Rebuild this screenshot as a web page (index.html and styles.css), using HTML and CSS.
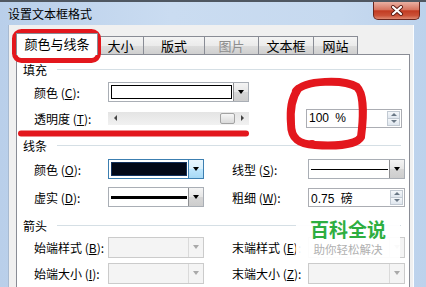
FILE: index.html
```html
<!DOCTYPE html>
<html lang="zh-CN">
<head>
  <meta charset="UTF-8">
  <title>设置文本框格式</title>
  <link rel="stylesheet" href="styles.css">
</head>
<body>

<div class="window">
  <div class="titlebar">
    <span class="title">设置文本框格式</span>
    <span class="close">
      <svg width="14" height="11" viewBox="0 0 14 11">
        <path d="M3 2 L11 9 M11 2 L3 9" stroke="#5a1c14" stroke-width="4" stroke-linecap="round"/>
        <path d="M3 2 L11 9 M11 2 L3 9" stroke="#fff" stroke-width="2.2" stroke-linecap="round"/>
      </svg>
    </span>
  </div>

  <div class="client">
    <div class="tabs">
      <div class="tab active t-color">颜色与线条</div>
      <div class="tab t-size">大小</div>
      <div class="tab t-layout">版式</div>
      <div class="tab t-pic disabled">图片</div>
      <div class="tab t-box">文本框</div>
      <div class="tab t-web">网站</div>
    </div>

    <div class="page">
      <div class="group">填充</div>
      <div class="row">
        <span class="lab">颜色 (<u>C</u>):</span>
        <div class="combo wide">
          <span class="val"></span>
          <span class="btn"></span>
        </div>
      </div>
      <div class="row">
        <span class="lab">透明度 (<u>T</u>):</span>
        <div class="slider">
          <span class="arr left"></span>
          <span class="track"></span>
          <span class="thumb"></span>
          <span class="arr right"></span>
        </div>
        <div class="spin pct">
          <span class="txt">100 %</span>
          <span class="arrows"><span class="up"></span><span class="down"></span></span>
        </div>
      </div>

      <div class="group sec">线条</div>
      <div class="row tall">
        <span class="lab">颜色 (<u>O</u>):</span>
        <div class="combo focus">
          <span class="val"></span>
          <span class="btn"></span>
        </div>
        <span class="lab lab2">线型 (<u>S</u>):</span>
        <div class="combo right">
          <span class="val thin"></span>
          <span class="btn"></span>
        </div>
      </div>
      <div class="row tall">
        <span class="lab">虚实 (<u>D</u>):</span>
        <div class="combo">
          <span class="val thick"></span>
          <span class="btn"></span>
        </div>
        <span class="lab lab2">粗细 (<u>W</u>):</span>
        <div class="spin right">
          <span class="txt">0.75 磅</span>
          <span class="arrows"><span class="up"></span><span class="down"></span></span>
        </div>
      </div>

      <div class="group sec">箭头</div>
      <div class="row first">
        <span class="lab">始端样式 (<u>B</u>):</span>
        <div class="combo off">
          <span class="val"></span>
          <span class="btn"></span>
        </div>
        <span class="lab lab2">末端样式 (<u>E</u>):</span>
        <div class="combo off right">
          <span class="val"></span>
          <span class="btn"></span>
        </div>
      </div>
      <div class="row last">
        <span class="lab">始端大小 (<u>I</u>):</span>
        <div class="combo off">
          <span class="val"></span>
          <span class="btn"></span>
        </div>
        <span class="lab lab2">末端大小 (<u>Z</u>):</span>
        <div class="combo off right">
          <span class="val"></span>
          <span class="btn"></span>
        </div>
      </div>
    </div>
  </div>
</div>

<div class="watermark">
  <span class="wm-title">百科全说</span>
  <span class="wm-sub">助你轻松解决</span>
</div>

<svg class="marks" width="426" height="287" viewBox="0 0 426 287">
  <rect x="14.5" y="31.5" width="84" height="29" rx="7" fill="none" stroke="#e3171d" stroke-width="5"/>
  <path d="M21 133.5 L246 133.5" stroke="#e3171d" stroke-width="6" stroke-linecap="round"/>
  <path d="M296 91 C305 80 344 79 357 87 C365 95 363 122 361 137 C356 146 330 146 315 145 C299 144 291 139 291 124 C290 110 291 99 298 89"
        fill="none" stroke="#e3171d" stroke-width="8" stroke-linecap="round"/>
  <circle cx="312" cy="144" r="4" fill="#e3171d"/>
</svg>

</body>
</html>
```

FILE: styles.css
```css
body {
  margin: 0;
  width: 426px;
  height: 287px;
  overflow: hidden;
  position: relative;
  font-family: "Noto Sans CJK SC", "Noto Sans", sans-serif;
  font-size: 12px;
  color: #000;
  background: #c2d6ee;
}
.window {
  display: flex;
  flex-direction: column;
  height: 285px;
  border-top: 2px solid #4f5761;
  background: linear-gradient(to right, #b9cfea, #cadcf1 40%, #c6d9ef 80%, #bcd2ec);
}
.titlebar {
  height: 25px;
  display: flex;
  justify-content: space-between;
  align-items: flex-start;
}
.title {
  padding: 3px 0 0 8px;
  line-height: 18px;
}
.close {
  width: 45px;
  height: 17px;
  margin-right: 6px;
  border: 1px solid #6a261d;
  border-top: none;
  border-radius: 0 0 5px 5px;
  background: linear-gradient(#eab0a2, #d77560 45%, #c23b22 52%, #cb5238 80%, #de8a72);
  display: flex;
  align-items: center;
  justify-content: center;
}

.client {
  flex: 1;
  margin: 0 12px 0 8px;
  padding: 0 3px 0 7px;
  background: #f0f0f0;
  border-left: 1px solid #a8bad0;
  border-right: 1px solid #fbfdff;
  display: flex;
  flex-direction: column;
}
.tabs {
  height: 29px;
  display: flex;
  align-items: flex-end;
}
.tab {
  height: 17px;
  line-height: 17px;
  font-size: 13px;
  text-align: center;
  border: 1px solid #898c95;
  border-bottom: none;
  margin-right: -1px;
  background: linear-gradient(#f4f4f4, #ebebeb 50%, #dddddd 51%, #cfcfcf);
}
.tab.active {
  height: 21px;
  line-height: 20px;
  margin-bottom: -1px;
  background: #fff;
  position: relative;
  z-index: 1;
}
.tab.disabled { color: #8e8e8e; }
.t-color { width: 80px; }
.t-size { width: 45px; }
.t-layout { width: 60px; }
.t-pic { width: 53px; }
.t-box { width: 54px; }
.t-web { width: 43px; }

.page {
  flex: 1;
  background: #fff;
  border: 1px solid #898c95;
  border-bottom: none;
}
.group {
  height: 20px;
  margin-top: 4px;
  padding-left: 6px;
  display: flex;
  align-items: center;
}
.group::after {
  content: "";
  flex: 1;
  height: 1px;
  margin: 0 8px 0 10px;
  background: #d5dfe5;
}
.row {
  height: 26px;
  padding-left: 17px;
  display: flex;
  align-items: center;
}
.row.tall { height: 28px; }
.row.first { height: 24px; }
.row.last { height: 28px; }
.lab {
  width: 74px;
  white-space: nowrap;
}
.lab2 {
  width: 76px;
  margin-left: 28px;
}

.combo {
  width: 96px;
  height: 20px;
  box-sizing: border-box;
  border: 1px solid #a9aeb5;
  background: #fff;
  padding: 2px 0 2px 2px;
  display: flex;
}
.combo.wide { width: 141px; }
.combo.right { width: 97px; }
.combo .val {
  flex: 1;
  border: 1px solid #000;
  margin-right: 1px;
}
.combo .btn {
  width: 14px;
  margin: -2px 0;
  border-left: 1px solid #8e8f92;
  background: linear-gradient(#f4f4f4, #e6e6e6 50%, #d6d6d6 51%, #cdcdcd);
  display: flex;
  align-items: center;
  justify-content: center;
}
.combo .btn::after {
  content: "";
  border-left: 3.5px solid transparent;
  border-right: 3.5px solid transparent;
  border-top: 4px solid #000;
}
.combo.focus { border-color: #3c7fb1; }
.combo.focus .val {
  background: #020817;
  border-color: #12305c;
}
.combo.focus .btn {
  border-left-color: #3c7fb1;
  background: linear-gradient(#eaf6fd, #d9f0fc 50%, #bee6fd 51%, #a7d9f5);
}
.combo .val.thin {
  border: none;
  background: linear-gradient(#000, #000) center / 100% 1px no-repeat;
}
.combo .val.thick {
  border: none;
  background: linear-gradient(#000, #000) center / 100% 3px no-repeat;
}
.combo.off {
  border-color: #cbcbcb;
  background: #f4f4f4;
  height: 21px;
}
.combo.off .val { border: none; }
.combo.off .btn {
  background: #f4f4f4;
  border-left-color: #dadada;
}
.combo.off .btn::after { border-top-color: #a9a9a9; }

.slider {
  width: 141px;
  height: 13px;
  background: linear-gradient(#e4e4e4, #f1f1f1);
  display: flex;
  align-items: center;
}
.slider .track { flex: 1; }
.slider .arr {
  width: 15px;
  display: flex;
  justify-content: center;
}
.slider .arr::after {
  content: "";
  border-top: 3px solid transparent;
  border-bottom: 3px solid transparent;
}
.slider .left::after { border-right: 3px solid #444; }
.slider .right { width: 14px; }
.slider .right::after { border-left: 3px solid #444; }
.slider .thumb {
  width: 13px;
  height: 9px;
  border: 1px solid #a3a3a3;
  border-radius: 2px;
  background: linear-gradient(#f6f6f6, #dadada);
}

.spin {
  width: 96px;
  height: 19px;
  box-sizing: border-box;
  border: 1px solid #abadb3;
  background: #fff;
  padding: 1px 1px 1px 2px;
  display: flex;
  align-items: center;
}
.spin.pct { margin-left: 57px; }
.spin.right { width: 97px; }
.spin .txt {
  flex: 1;
  font-family: "Liberation Sans", sans-serif;
  font-size: 12px;
  word-spacing: 3px;
}
.spin.right .txt { font-family: "Liberation Sans", "Noto Sans CJK SC", sans-serif; }
.spin .arrows {
  width: 13px;
  height: 100%;
  display: flex;
  flex-direction: column;
}
.spin .arrows span {
  flex: 1;
  border: 1px solid #c2cad3;
  background: linear-gradient(#f4f7fa, #dfe6ee);
  display: flex;
  align-items: center;
  justify-content: center;
}
.spin .arrows .down { border-top: none; }
.spin .arrows span::after {
  content: "";
  border-left: 3px solid transparent;
  border-right: 3px solid transparent;
}
.spin .up::after { border-bottom: 3px solid #6a7886; }
.spin .down::after { border-top: 3px solid #6a7886; }

.watermark {
  position: absolute;
  left: 296px;
  top: 212px;
  width: 104px;
  height: 51px;
  background: rgba(255, 255, 255, 0.94);
  display: flex;
  flex-direction: column;
  align-items: center;
}
.wm-title {
  margin-top: 5px;
  font-size: 19px;
  line-height: 24px;
  font-weight: bold;
  color: #2eae40;
}
.wm-sub {
  font-size: 11.5px;
  line-height: 16px;
  color: #b0b0b0;
}
.marks {
  position: absolute;
  left: 0;
  top: 0;
  pointer-events: none;
}
```
